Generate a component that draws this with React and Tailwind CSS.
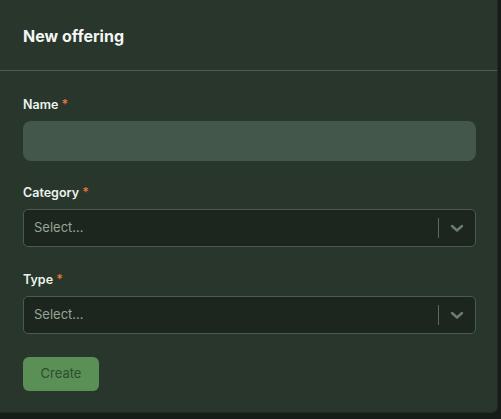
import React from 'react';

function Label({ children }) {
  return (
    <label className="block text-[12.5px] leading-4 font-semibold text-[#eef2ee] mb-2">
      {children} <span className="text-[#e2773d]">*</span>
    </label>
  );
}

function SelectBox() {
  return (
    <div className="flex items-center h-[38px] rounded-[5px] border border-[#4a5c4d] bg-[#1c261f]">
      <span className="flex-1 pl-[10px] text-[13px] text-[#95a596]">Select...</span>
      <span className="w-px h-5 bg-[#5a6b5c]" />
      <span className="w-9 flex items-center justify-center text-[#6b7d6d]">
        <svg width="14" height="10" viewBox="0 0 14 10" fill="none" stroke="currentColor" strokeWidth="2.4" strokeLinecap="round" strokeLinejoin="round">
          <path d="M2 3l5 4.5 5-4.5" />
        </svg>
      </span>
    </div>
  );
}

export default function App() {
  return (
    <div className="w-[501px] h-[419px] bg-[#161d18] font-['Inter',sans-serif]">
      <div className="w-[498px] h-[413px] bg-[#28362b] rounded-br-[6px] border-r border-b border-[#1f2a21] flex flex-col">
        <div className="h-[71px] flex items-center pt-[2px] px-[23px] border-b border-[#4c5e4f]">
          <h2 className="text-[16px] font-bold text-[#f3f6f3]">New offering</h2>
        </div>
        <div className="pl-[23px] pr-[21px] pt-[26px] flex flex-col">
          <div className="mb-6">
            <Label>Name</Label>
            <div className="h-10 rounded-lg bg-[#43574a]" />
          </div>
          <div className="mb-[25px]">
            <Label>Category</Label>
            <SelectBox />
          </div>
          <div className="mb-[23px]">
            <Label>Type</Label>
            <SelectBox />
          </div>
          <button className="w-[76px] h-[34px] rounded-md bg-[#5a8f55] text-[13px] text-[#2f4d2f]">
            Create
          </button>
        </div>
      </div>
    </div>
  );
}
